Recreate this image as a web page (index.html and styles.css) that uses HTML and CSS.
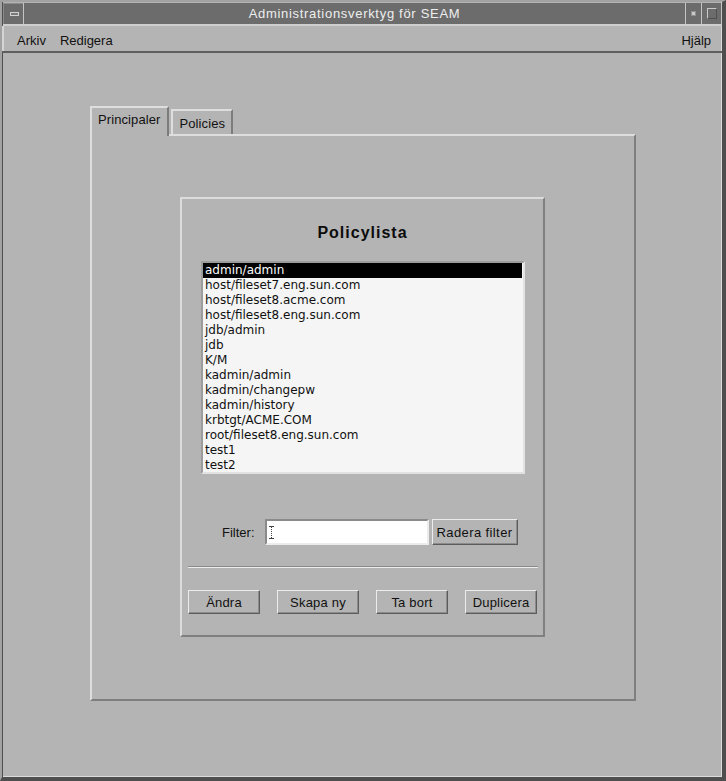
FILE: index.html
```html
<!DOCTYPE html>
<html lang="sv">
<head>
    <meta charset="UTF-8">
    <title>Administrationsverktyg för SEAM</title>
    <link rel="stylesheet" href="styles.css">
</head>
<body>
    <div class="window">
        <div class="titlebar">
            <span class="tb-btn tb-menu"><span class="bar"></span></span>
            <span class="tb-title">Administrationsverktyg för SEAM</span>
            <span class="tb-btn tb-min"><span class="dot"></span></span>
            <span class="tb-btn tb-max"><span class="box"></span></span>
        </div>
        <div class="menubar">
            <span class="menu-item">Arkiv</span>
            <span class="menu-item">Redigera</span>
            <span class="spacer"></span>
            <span class="menu-item">Hjälp</span>
        </div>
        <div class="content">
            <div class="tabs">
                <div class="tab active">Principaler</div>
                <div class="tab">Policies</div>
            </div>
            <div class="tab-panel">
                <div class="policy-box">
                    <h1>Policylista</h1>
                    <ul class="list">
                        <li class="selected">admin/admin</li>
                        <li>host/fileset7.eng.sun.com</li>
                        <li>host/fileset8.acme.com</li>
                        <li>host/fileset8.eng.sun.com</li>
                        <li>jdb/admin</li>
                        <li>jdb</li>
                        <li>K/M</li>
                        <li>kadmin/admin</li>
                        <li>kadmin/changepw</li>
                        <li>kadmin/history</li>
                        <li>krbtgt/ACME.COM</li>
                        <li>root/fileset8.eng.sun.com</li>
                        <li>test1</li>
                        <li>test2</li>
                    </ul>
                    <div class="filter-row">
                        <label for="filter">Filter:</label>
                        <div class="filter-input">
                            <svg class="caret" width="5" height="13" viewBox="0 0 5 13">
                                <path d="M0 0.5h5M0 12.5h5" stroke="#444" stroke-width="1"/>
                                <path d="M2.5 1v11" stroke="#444" stroke-width="1" stroke-dasharray="1 1"/>
                            </svg>
                        </div>
                        <button class="btn btn-filter">Radera filter</button>
                    </div>
                    <div class="sep"></div>
                    <div class="actions">
                        <button class="btn">Ändra</button>
                        <button class="btn btn-wide">Skapa ny</button>
                        <button class="btn">Ta bort</button>
                        <button class="btn">Duplicera</button>
                    </div>
                </div>
            </div>
        </div>
    </div>
</body>
</html>
```

FILE: styles.css
```css
body {
    margin: 0;
    font-family: "Liberation Sans", Arial, sans-serif;
    font-size: 13px;
    color: #111;
    background: #b4b4b4;
}
.window {
    width: 726px;
    height: 781px;
    box-sizing: border-box;
    display: flex;
    flex-direction: column;
    background: #b4b4b4;
    border-style: solid;
    border-width: 2px 4px 4px 2px;
    border-color: #a2a2a2 #4e4e4e #4e4e4e #a2a2a2;
    box-shadow: inset 1px 0 #4e4e4e, inset -1px -1px #dadada;
}
.titlebar {
    display: flex;
    height: 21px;
    margin: 1px 0 0 1px;
    background: #6c6c6c;
    border-bottom: 2px solid #cfcfcf;
}
.tb-btn {
    display: flex;
    align-items: center;
    justify-content: center;
    box-sizing: border-box;
    height: 21px;
}
.tb-menu {
    width: 21px;
    border-right: 1px solid #c4c4c4;
    box-shadow: inset 1px 1px #8a8a8a;
}
.tb-menu .bar {
    width: 7px;
    height: 2px;
    margin-left: 2px;
    background: #7a7a7a;
    border: 1px solid #d2d2d2;
}
.tb-title {
    flex: 1;
    text-align: center;
    line-height: 21px;
    color: #eeeeee;
    letter-spacing: 0.7px;
}
.tb-min {
    width: 17px;
    border-left: 1px solid #c4c4c4;
    border-right: 1px solid #c4c4c4;
}
.tb-min .dot {
    width: 3px;
    height: 3px;
    background: #c8c8c8;
    border: 1px solid #909090;
}
.tb-max {
    width: 20px;
    border-right: 1px solid #c4c4c4;
}
.tb-max .box {
    width: 8px;
    height: 9px;
    border: 1px solid #c8c8c8;
    border-right-color: #505050;
    border-bottom-color: #505050;
}
.menubar {
    display: flex;
    height: 27px;
    box-sizing: border-box;
    padding: 5px 4px 0 8px;
    border-bottom: 2px solid #5e5e5e;
    box-shadow: inset 2px 0 #d4d4d4;
    line-height: 19px;
}
.menu-item {
    padding: 0 7px;
}
.spacer {
    flex: 1;
}
.content {
    flex: 1;
    padding: 53px 0 0 88px;
}
.tabs {
    display: flex;
    align-items: flex-end;
    height: 28px;
}
.tab {
    box-sizing: border-box;
    height: 25px;
    margin-left: 2px;
    padding: 2px 6px 0 7px;
    line-height: 22px;
    border-top: 2px solid #dedede;
    border-left: 2px solid #dedede;
    border-right: 2px solid #7c7c7c;
    letter-spacing: 0.1px;
}
.tab.active {
    position: relative;
    z-index: 1;
    height: 30px;
    margin: 0 0 -2px 0;
    padding: 1px 6px 0 6px;
    background: #b4b4b4;
}
.tab-panel {
    box-sizing: border-box;
    width: 546px;
    height: 567px;
    padding: 61px 0 0 88px;
    border: 2px solid;
    border-color: #dedede #7e7e7e #7e7e7e #dedede;
}
.policy-box {
    box-sizing: border-box;
    width: 365px;
    height: 440px;
    border: 2px solid;
    border-color: #dcdcdc #808080 #808080 #dcdcdc;
    display: flex;
    flex-direction: column;
}
.policy-box h1 {
    margin: 24px 0 0;
    font-size: 16px;
    line-height: 20px;
    font-weight: bold;
    text-align: center;
    letter-spacing: 1px;
    color: #0c0c0c;
}
.list {
    list-style: none;
    box-sizing: border-box;
    width: 324px;
    height: 213px;
    margin: 18px 0 0 19px;
    padding: 0;
    background: #f5f5f5;
    border: 2px solid;
    border-color: #9c9c9c #e2e2e2 #e2e2e2 #9c9c9c;
    font-family: "DejaVu Sans", Verdana, sans-serif;
    font-size: 12px;
}
.list li {
    height: 15px;
    line-height: 15px;
    padding-left: 2px;
    margin-right: 1px;
    white-space: nowrap;
}
.list li.selected {
    background: #000;
    color: #fff;
}
.filter-row {
    display: flex;
    align-items: center;
    margin: 45px 0 0 40px;
    height: 26px;
}
.filter-row label {
    margin-right: 10px;
}
.filter-input {
    box-sizing: border-box;
    width: 164px;
    height: 26px;
    display: flex;
    align-items: center;
    padding-left: 2px;
    background: #fff;
    border: 2px solid;
    border-color: #8a8a8a #ececec #ececec #8a8a8a;
}
.btn {
    box-sizing: border-box;
    height: 24px;
    width: 72px;
    padding: 0;
    font-family: "Liberation Sans", Arial, sans-serif;
    font-size: 13px;
    letter-spacing: 0.2px;
    color: #111;
    background: #b4b4b4;
    border: 1px solid;
    border-color: #ececec #5c5c5c #5c5c5c #ececec;
    box-shadow: inset -1px -1px #8c8c8c;
}
.btn-filter {
    width: 86px;
    height: 26px;
    margin-left: 3px;
    letter-spacing: 0.4px;
}
.btn-wide {
    width: 82px;
}
.sep {
    margin: 21px 5px 0 6px;
    border-top: 1px solid #8a8a8a;
    border-bottom: 1px solid #ececec;
}
.actions {
    display: flex;
    justify-content: space-between;
    margin: 22px 6px 0 6px;
}
```
